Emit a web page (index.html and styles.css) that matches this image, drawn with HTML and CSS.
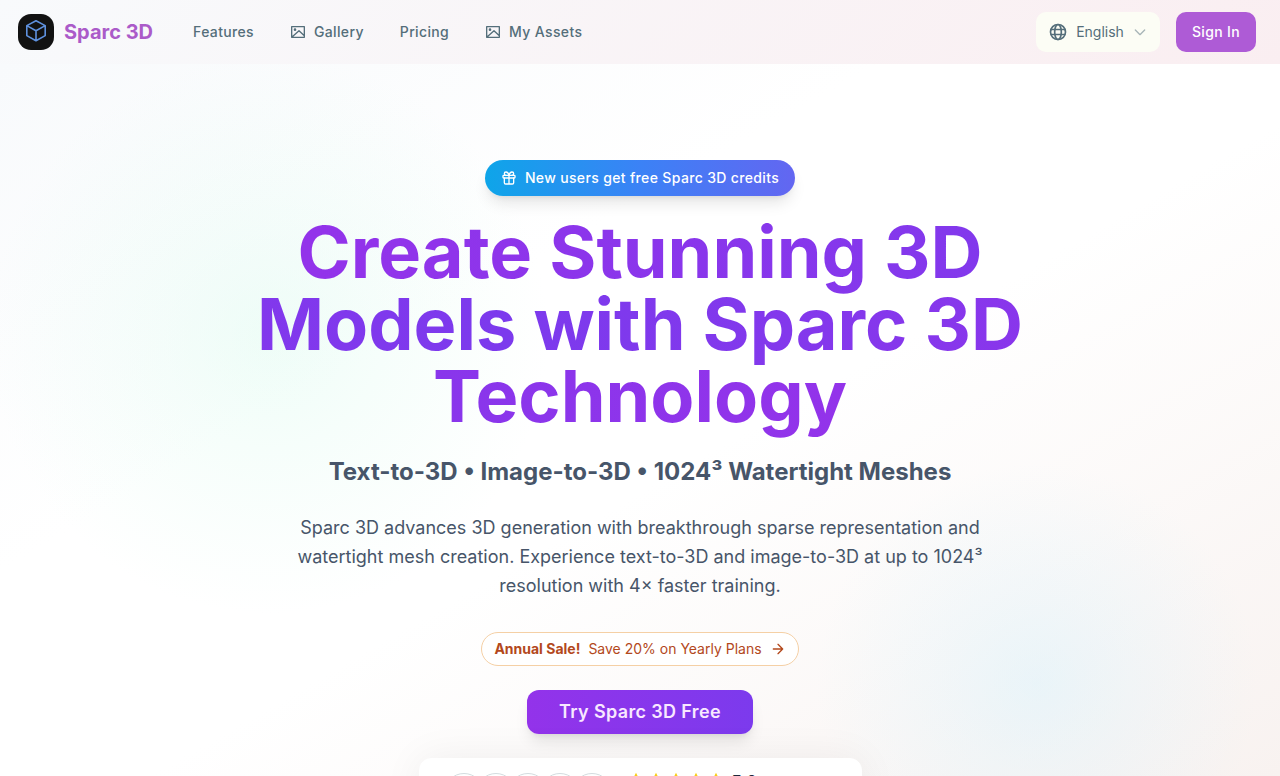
FILE: index.html
```
<!DOCTYPE html>
<html lang="en">

<head>
    <meta charset="UTF-8">
    <meta name="viewport" content="width=device-width, initial-scale=1.0">
    <title>Sparc 3D</title>
    <link rel="stylesheet" href="styles.css">
</head>

<body>

    <!-- Shared icons -->
    <svg class="sprite" aria-hidden="true">
        <symbol id="image" viewBox="0 0 24 24">
            <path d="M2.500 4h19v16h-19zM3 19.500 13.500 10l8 7.500" />
            <circle cx="7.500" cy="8.500" r="1" />
        </symbol>
        <symbol id="star" viewBox="0 0 24 24">
            <path d="m12 2 3.100 6.300 6.900 1-5 4.900 1.200 6.800-6.200-3.200L5.800 21 7 14.200 2 9.300l6.900-1z" />
        </symbol>
    </svg>

    <header class="header">
        <a class="brand" href="#">
            <svg class="logo" viewBox="0 0 36 36">
                <rect width="36" height="36" rx="13" fill="#121212" />
                <path d="M18 6.800 27.200 11.600v10L18 26.800l-9.200-5.200v-10zM8.800 11.600 18 16.800l9.200-5.200M18 16.800v10" fill="none" stroke="#5f92e0" stroke-width="1.600" stroke-linejoin="round" />
            </svg>
            <span>Sparc 3D</span>
        </a>
        <nav class="nav">
            <a href="#">Features</a>
            <a href="#"><svg class="icon"><use href="#image" /></svg>Gallery</a>
            <a href="#">Pricing</a>
            <a href="#"><svg class="icon"><use href="#image" /></svg>My Assets</a>
        </nav>
        <div class="actions">
            <button class="language" type="button">
                <svg class="icon globe" viewBox="0 0 24 24">
                    <circle cx="12" cy="12" r="9" />
                    <ellipse cx="12" cy="12" rx="4" ry="9" />
                    <path d="M4 9h16M4 15h16" />
                </svg>
                English
                <svg class="icon chevron" viewBox="0 0 24 24">
                    <path d="m5 9 7 7 7-7" />
                </svg>
            </button>
            <button class="sign-in" type="button">Sign In</button>
        </div>
    </header>

    <main class="hero">
        <div class="credits">
            <svg class="icon" viewBox="0 0 24 24">
                <rect x="3" y="8" width="18" height="4" rx="1" />
                <path d="M12 8v13M19 12v7a2 2 0 0 1-2 2H7a2 2 0 0 1-2-2v-7M7.500 8a2.500 2.500 0 0 1 0-5A4.800 8 0 0 1 12 8a4.800 8 0 0 1 4.500-5 2.500 2.500 0 0 1 0 5" />
            </svg>
            New users get free Sparc 3D credits
        </div>

        <h1><span>Create Stunning 3D Models with Sparc 3D Technology</span></h1>
        <h2>Text-to-3D • Image-to-3D • 1024³ Watertight Meshes</h2>
        <p class="intro">Sparc 3D advances 3D generation with breakthrough sparse representation and watertight mesh creation. Experience text-to-3D and image-to-3D at up to 1024³ resolution with 4× faster training.</p>

        <a class="sale" href="#">
            <strong>Annual Sale!</strong>
            <span>Save 20% on Yearly Plans</span>
            <svg class="icon" viewBox="0 0 24 24">
                <path d="M5 12h14M12 5l7 7-7 7" />
            </svg>
        </a>

        <button class="try" type="button">Try Sparc 3D Free</button>

        <!-- Reviews -->
        <section class="reviews">
            <div class="avatars">
                <span class="avatar"></span>
                <span class="avatar"></span>
                <span class="avatar"></span>
                <span class="avatar"></span>
                <span class="avatar"></span>
            </div>
            <div class="rating">
                <svg class="star"><use href="#star" /></svg>
                <svg class="star"><use href="#star" /></svg>
                <svg class="star"><use href="#star" /></svg>
                <svg class="star"><use href="#star" /></svg>
                <svg class="star"><use href="#star" /></svg>
                <strong>5.0</strong>
            </div>
        </section>
    </main>

</body>

</html>
```

FILE: styles.css
```
* {
    box-sizing: border-box;
}

body {
    margin: 0;
    height: 100vh;
    overflow: hidden;
    display: flex;
    flex-direction: column;
    font-family: Inter, sans-serif;
    font-size: 14px;
    line-height: 20px;
    letter-spacing: 0.025em;
    color: #475569;
    background: #fff;
}

a {
    color: inherit;
    text-decoration: none;
}

button {
    border: none;
    font: inherit;
    letter-spacing: inherit;
    cursor: pointer;
}

.sprite {
    display: none;
}

.icon {
    width: 16px;
    height: 16px;
    flex-shrink: 0;
    fill: none;
    stroke: currentColor;
    stroke-width: 2;
    stroke-linecap: round;
    stroke-linejoin: round;
}

.header {
    flex-shrink: 0;
    height: 64px;
    padding: 0 24px 0 18px;
    display: flex;
    align-items: center;
    gap: 40px;
    color: #546e7a;
    font-weight: 500;
    background: linear-gradient(135deg, #f8fafc, #faeef1);
}

.brand {
    display: flex;
    align-items: center;
    gap: 10px;
    font-size: 20px;
    line-height: 28px;
    font-weight: 700;
    letter-spacing: 0;
    color: #ab5bc9;
}

.logo {
    width: 36px;
    height: 36px;
}

.nav {
    display: flex;
    gap: 36px;
}

.nav a {
    display: flex;
    align-items: center;
    gap: 8px;
}

.actions {
    margin-left: auto;
    display: flex;
    gap: 16px;
}

.language {
    height: 40px;
    padding: 0 12px;
    display: flex;
    align-items: center;
    gap: 8px;
    border-radius: 10px;
    font-weight: 400;
    letter-spacing: 0;
    color: #546e7a;
    background: #fcfdf5;
}

.globe {
    width: 20px;
    height: 20px;
}

.chevron {
    opacity: 0.5;
}

.sign-in {
    height: 40px;
    padding: 0 16px;
    border-radius: 10px;
    font-weight: 500;
    color: #fff;
    background: #ae5bd6;
}

.hero {
    flex: 1;
    min-height: 0;
    padding: 96px 24px 0;
    display: flex;
    flex-direction: column;
    align-items: center;
    text-align: center;
    background:
        radial-gradient(circle at 21% 38%, #d1faea59 0, #d1faea33 110px, #d1faea00 280px),
        radial-gradient(circle at 81% 87%, #d5f1fc73 0, #d5f1fc40 90px, #d5f1fc00 220px),
        linear-gradient(150deg, #f8fafc 0%, #fff 35%, #fff 55%, #f8f2f0 100%);
}

.hero > * {
    flex-shrink: 0;
}

.credits {
    padding: 8px 16px;
    display: flex;
    align-items: center;
    gap: 8px;
    border-radius: 18px;
    font-weight: 500;
    color: #fff;
    background: linear-gradient(90deg, #0ea5e9, #3b82f6 50%, #6366f1);
    box-shadow: 0 10px 15px -3px #0000001a, 0 4px 6px -4px #0000001a;
}

h1 {
    max-width: 896px;
    margin: 20px 0 24px;
    font-size: 72px;
    line-height: 72px;
    font-weight: 700;
    letter-spacing: 0;
}

h1 span {
    color: transparent;
    background: linear-gradient(90deg, #9333ea, #7c3aed, #9333ea);
    -webkit-background-clip: text;
    background-clip: text;
}

h2 {
    margin: 0 0 24px;
    font-size: 24px;
    line-height: 32px;
    font-weight: 700;
    letter-spacing: 0;
}

.intro {
    max-width: 688px;
    margin: 1px 0 32px;
    font-size: 18px;
    line-height: 29px;
    letter-spacing: 0;
}

.sale {
    padding: 6px 12px;
    display: flex;
    align-items: center;
    gap: 8px;
    border: 1px solid #f5d0a5;
    border-radius: 17px;
    letter-spacing: 0;
    color: #b3481c;
    background: #fff;
}

.sale strong {
    font-weight: 700;
}

.try {
    margin: 24px 0;
    padding: 8px 32px;
    border-radius: 12px;
    font-size: 18px;
    line-height: 28px;
    font-weight: 600;
    color: #f8e8ff;
    background: linear-gradient(90deg, #9333ea, #7c3aed);
    box-shadow: 0 10px 15px -3px #0000001a, 0 4px 6px -4px #0000001a;
}

.reviews {
    width: 100%;
    max-width: 443px;
    padding: 12px 24px;
    display: flex;
    align-items: center;
    gap: 14px;
    border: 1px solid #fff;
    border-radius: 12px;
    background: #fff;
    box-shadow: 0 0 40px #0f172a0f;
}

.avatars {
    display: flex;
}

.avatar {
    width: 40px;
    height: 40px;
    border: 1px solid #d3dcdf;
    border-radius: 50%;
    background: #fff;
}

.avatar + .avatar {
    margin-left: -8px;
}

.rating {
    height: 44px;
    display: flex;
    align-items: flex-start;
}

.star {
    width: 20px;
    height: 20px;
    fill: #facc15;
}

.rating strong {
    margin-left: 6px;
    font-size: 16px;
    letter-spacing: 0;
    color: #1e293b;
}
```
